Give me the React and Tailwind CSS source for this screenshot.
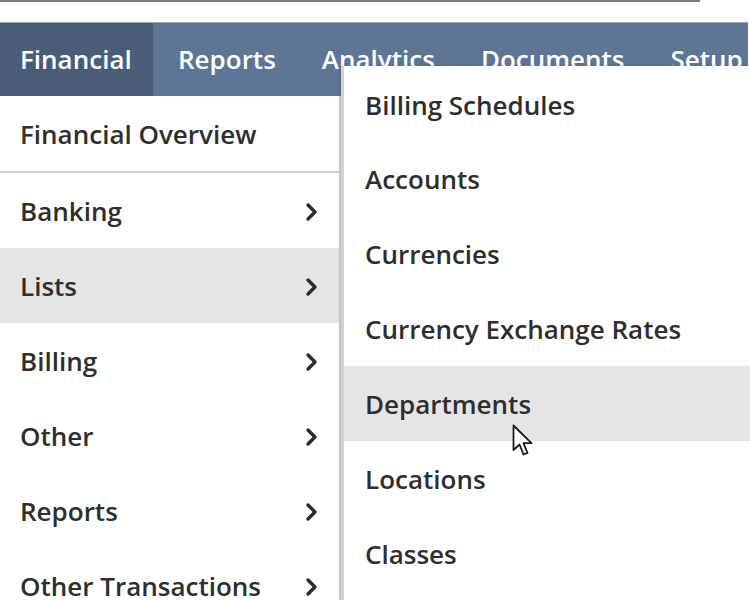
import React from "react";

const Chevron = () => (
  <svg width="14" height="20" viewBox="0 0 14 20" className="shrink-0">
    <polyline points="3,3 10,10 3,17" fill="none" stroke="#2b2b2b" strokeWidth="3.4" strokeLinecap="round" strokeLinejoin="round" />
  </svg>
);

const Cursor = () => (
  <svg width="24" height="36" viewBox="0 0 24 36" className="absolute left-[512px] top-[424px]">
    <path d="M1.5 1.5 L1.5 26 L7.5 20.5 L11.5 30.5 L15.5 28.8 L11.5 19.2 L19.5 19.2 Z" fill="#fff" stroke="#1a1a1a" strokeWidth="1.8" strokeLinejoin="round" />
  </svg>
);

export default function App() {
  const tabs = ["Financial", "Reports", "Analytics", "Documents", "Setup"];
  const left = ["Banking", "Lists", "Billing", "Other", "Reports", "Other Transactions"];
  const right = ["Billing Schedules", "Accounts", "Currencies", "Currency Exchange Rates", "Departments", "Locations", "Classes"];
  return (
    <div className="relative w-[750px] h-[600px] overflow-hidden bg-white" style={{ fontFamily: '"Open Sans", sans-serif' }}>
      <div className="h-[2px] w-[700px] bg-[#7b7b7b]" />
      <div className="h-[20px]" />
      <div className="flex h-[74px] w-[748px] bg-[#5f7596] border-t border-[#9aa8bd]">
        {tabs.map((t, i) => (
          <div
            key={t}
            className={`flex items-center text-[26px] font-semibold text-white ${i === 0 ? "bg-[#4b5c78] pl-[20px] pr-[22px] w-[153px]" : "pl-[25px] pr-[21px]"}`}
          >
            {t}
          </div>
        ))}
      </div>
      <div className="w-[342px] border-r-[3px] border-[#d6d6d6] bg-white h-[504px]">
        <div className="h-[77px] flex items-center pl-[20px] pt-[2px] text-[26px] font-semibold text-[#2e2e2e] border-b-2 border-[#cfcfcf]">
          Financial Overview
        </div>
        {left.map((t) => (
          <div
            key={t}
            className={`h-[75px] flex items-center justify-between pl-[20px] pr-[20px] pt-[2px] text-[26px] font-semibold text-[#2e2e2e] ${t === "Lists" ? "bg-[#e5e5e5]" : ""}`}
          >
            <span>{t}</span>
            <Chevron />
          </div>
        ))}
      </div>
      <div className="absolute left-[341px] top-[66px] w-[409px] h-[534px] bg-white border-l-[3px] border-[#d2d2d2] shadow-[-1px_0_3px_rgba(0,0,0,0.15)]">
        {right.map((t, i) => (
          <div
            key={t}
            className={`h-[75px] flex items-center pl-[21px] pt-[2px] text-[26px] font-semibold text-[#2e2e2e] ${i === 0 ? "pt-[3px]" : ""} ${t === "Departments" ? "bg-[#e5e5e5]" : ""}`}
          >
            {t}
          </div>
        ))}
      </div>
      <Cursor />
    </div>
  );
}
